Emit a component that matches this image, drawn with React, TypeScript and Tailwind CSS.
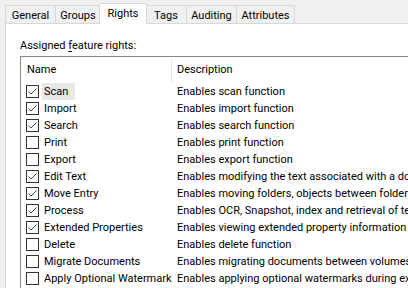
import React from "react";

type Right = { name: string; description: string; checked: boolean };

const rights: Right[] = [
  { name: "Scan", description: "Enables scan function", checked: true },
  { name: "Import", description: "Enables import function", checked: true },
  { name: "Search", description: "Enables search function", checked: true },
  { name: "Print", description: "Enables print function", checked: false },
  { name: "Export", description: "Enables export function", checked: false },
  { name: "Edit Text", description: "Enables modifying the text associated with a document", checked: true },
  { name: "Move Entry", description: "Enables moving folders, objects between folders", checked: true },
  { name: "Process", description: "Enables OCR, Snapshot, index and retrieval of text", checked: true },
  { name: "Extended Properties", description: "Enables viewing extended property information", checked: true },
  { name: "Delete", description: "Enables delete function", checked: false },
  { name: "Migrate Documents", description: "Enables migrating documents between volumes", checked: false },
  { name: "Apply Optional Watermark", description: "Enables applying optional watermarks during export", checked: false },
];

function CheckBox({ checked }: { checked: boolean }) {
  return (
    <span className="flex h-[13px] w-[13px] shrink-0 items-center justify-center border border-[#333333] bg-white">
      {checked ? (
        <svg width="11" height="11" viewBox="0 0 11 11" fill="none" aria-hidden="true">
          <path d="M1.5 5.5L4 8L9.5 2.5" stroke="#444444" strokeWidth="1" />
        </svg>
      ) : null}
    </span>
  );
}

function Tab({ label, className }: { label: string; className: string }) {
  return (
    <div
      className={`flex h-[18px] shrink-0 items-start justify-center border border-b-0 border-[#d9d9d9] bg-[#f0f0f0] pt-[3px] leading-[14px] ${className}`}
    >
      {label}
    </div>
  );
}

export default function App() {
  return (
    <div
      className="h-[288px] w-[408px] overflow-hidden bg-[#f0f0f0] text-[11px] text-black"
      style={{ fontFamily: "Roboto, sans-serif" }}
    >
      <div className="flex h-[23px] items-end pl-[5px]">
        <Tab label="General" className="w-[51px]" />
        <Tab label="Groups" className="-ml-px w-[46px]" />
        <div className="relative z-10 -mb-px -ml-[2px] flex h-[21px] w-[48px] shrink-0 items-start justify-center border border-b-0 border-[#d9d9d9] bg-white pt-[3px] leading-[14px]">
          Rights
        </div>
        <Tab label="Tags" className="-ml-[2px] w-[42px]" />
        <Tab label="Auditing" className="-ml-px w-[51px]" />
        <Tab label="Attributes" className="-ml-px w-[59px]" />
      </div>

      <div className="ml-[5px] h-[265px] border-l border-t border-[#d9d9d9] bg-white pl-[14px] pt-[14px]">
        <div className="h-[18px] leading-[16px]">
          Assigned <span className="underline underline-offset-2">f</span>eature rights:
        </div>

        <div className="h-[240px] w-[400px] overflow-hidden border border-[#828790] bg-white">
          <div className="flex h-[26px] items-center">
            <div className="flex h-[23px] w-[151px] shrink-0 items-center border-r border-[#e5e5e5] pl-[6px] pt-px">
              Name
            </div>
            <div className="shrink-0 pl-[5px] pt-px">Description</div>
          </div>
          {rights.map((r, i) => (
            <div key={r.name} className="flex h-[17px] items-center whitespace-nowrap">
              <div className="flex w-[151px] shrink-0 items-center pl-[5px]">
                <CheckBox checked={r.checked} />
                <span
                  className={`ml-[3px] h-[17px] pl-[2px] leading-[17px] ${i === 0 ? "bg-[#e8e8e8] pr-[7px]" : "pr-px"}`}
                >
                  {r.name}
                </span>
              </div>
              <div className="shrink-0 pl-[5px] leading-[17px]">{r.description}</div>
            </div>
          ))}
        </div>
      </div>
    </div>
  );
}
